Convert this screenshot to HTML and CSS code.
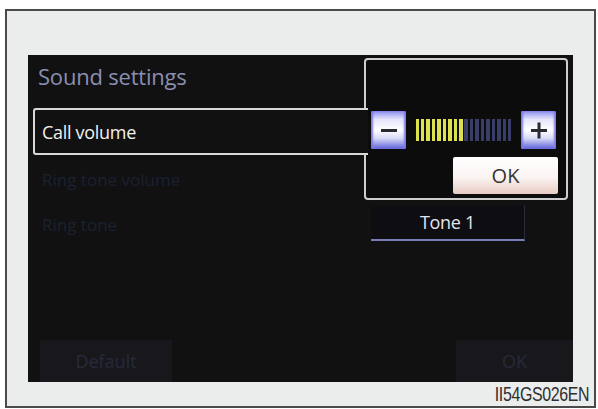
FILE: index.html
```html
<!DOCTYPE html>
<html>
<head>
<meta charset="utf-8">
<link rel="stylesheet" href="styles.css">
</head>
<body>
<div class="frame">
  <div class="screen">
    <div class="title">Sound settings</div>
    <div class="row row-active"><span class="label-on">Call volume</span></div>
    <div class="row row-dim"><span class="label-off">Ring tone volume</span></div>
    <div class="row row-dim row-tone">
      <span class="label-off">Ring tone</span>
      <div class="tone-btn">Tone 1</div>
    </div>
    <div class="bottom">
      <div class="soft-btn soft-default">Default</div>
      <div class="soft-btn soft-ok">OK</div>
    </div>
    <div class="popup">
      <div class="vol">
        <div class="pm-btn"><svg width="20" height="20" viewBox="0 0 20 20"><rect x="2" y="9" width="16" height="3" fill="#2a2a33"/></svg></div>
        <div class="bars">
          <i class="bar on"></i><i class="bar on"></i><i class="bar on"></i><i class="bar on"></i><i class="bar on"></i><i class="bar on"></i><i class="bar on"></i><i class="bar on"></i><i class="bar on"></i>
          <i class="bar off"></i><i class="bar off"></i><i class="bar off"></i><i class="bar off"></i><i class="bar off"></i><i class="bar off"></i><i class="bar off"></i><i class="bar off"></i><i class="bar off"></i>
        </div>
        <div class="pm-btn"><svg width="20" height="20" viewBox="0 0 20 20"><rect x="2" y="9" width="16" height="3" fill="#2a2a33"/><rect x="8.5" y="2.5" width="3" height="16" fill="#2a2a33"/></svg></div>
      </div>
      <div class="ok-row"><div class="ok-btn">OK</div></div>
    </div>
  </div>
  <div class="caption"><span class="code">II54GS026EN</span></div>
</div>
</body>
</html>
```
FILE: styles.css
```css
html, body {
  margin: 0;
  padding: 0;
  background: #ffffff;
}
body {
  font-family: "Open Sans", "Noto Sans", sans-serif;
}
.frame {
  box-sizing: border-box;
  margin: 9px 0 0 5px;
  width: 591px;
  height: 399px;
  border: 2px solid #4a4a4a;
  background: #ebedec;
  padding: 44px 0 0 21px;
}
.screen {
  position: relative;
  box-sizing: border-box;
  width: 545px;
  height: 327px;
  background: #111111;
  display: flex;
  flex-direction: column;
  padding-left: 5px;
}
.title {
  height: 42px;
  line-height: 42px;
  margin-bottom: 11px;
  padding-left: 5px;
  font-size: 22px;
  color: #8b8eb3;
  letter-spacing: -0.2px;
}
.row {
  box-sizing: border-box;
  display: flex;
  align-items: center;
}
.row-active {
  position: relative;
  z-index: 2;
  width: 335px;
  height: 47px;
  border: 2px solid #d9d9d9;
  border-right: none;
  border-radius: 3px 0 0 3px;
  background: #111111;
  padding-left: 7px;
}
.label-on {
  font-size: 18px;
  color: #f2f2f2;
  letter-spacing: -0.3px;
}
.row-dim {
  height: 45px;
  padding-left: 9px;
}
.row-dim:nth-of-type(3) {
  margin-top: 2px;
}
.label-off {
  font-size: 17px;
  color: #1a2130;
}
.row-tone {
  justify-content: space-between;
  width: 492px;
}
.tone-btn {
  box-sizing: border-box;
  width: 154px;
  height: 35px;
  margin-top: -2px;
  border-bottom: 2px solid #7a7cb8;
  border-right: 1px solid #2c2c3c;
  background: #0e0e12;
  color: #e4e4ee;
  font-size: 18px;
  text-align: center;
  line-height: 33px;
  letter-spacing: -0.3px;
}
.bottom {
  margin-top: auto;
  display: flex;
  justify-content: space-between;
  padding-left: 7px;
}
.soft-btn {
  height: 42px;
  line-height: 42px;
  text-align: center;
  font-size: 18px;
  color: #262a3a;
  background: #18181c;
}
.soft-default {
  width: 132px;
}
.soft-ok {
  width: 117px;
}
.popup {
  position: absolute;
  z-index: 1;
  left: 336px;
  top: 3px;
  box-sizing: border-box;
  width: 204px;
  height: 142px;
  border: 2px solid #cfcfcf;
  border-radius: 4px;
  background: #0c0c0c;
  padding: 51px 10px 0 5px;
  display: flex;
  flex-direction: column;
}
.vol {
  display: flex;
  align-items: center;
  justify-content: space-between;
}
.pm-btn {
  box-sizing: border-box;
  width: 35px;
  height: 38px;
  border-radius: 2px;
  background: linear-gradient(to bottom, #8c8ef0 0%, #e4e4fa 22%, #ffffff 50%, #d8daf6 72%, #5d60d8 100%);
  box-shadow: inset 2px 0 2px #7a7ce8, inset -2px 0 2px #7a7ce8;
  display: flex;
  align-items: center;
  justify-content: center;
}
.bars {
  width: 96px;
  height: 22px;
  display: flex;
  justify-content: space-between;
}
.bar {
  display: block;
  width: 3.5px;
  height: 22px;
}
.bar.on {
  background: #dde24c;
}
.bar.off {
  background: #3a3d68;
}
.ok-row {
  display: flex;
  justify-content: flex-end;
  margin-top: 8px;
  margin-right: -2px;
}
.ok-btn {
  width: 105px;
  height: 37px;
  line-height: 37px;
  text-align: center;
  font-size: 20px;
  color: #333333;
  background: linear-gradient(to bottom, #ffffff 0%, #faf4f2 55%, #e8cbc3 100%);
  border-radius: 2px;
}
.caption {
  display: flex;
  justify-content: flex-end;
  padding-right: 5px;
  height: 20px;
  margin-top: 2px;
}
.code {
  font-family: "Liberation Sans", Arial, sans-serif;
  font-size: 21px;
  line-height: 20px;
  color: #2e2e2e;
  transform: scaleX(0.76);
  transform-origin: right center;
  letter-spacing: -0.5px;
}
```
